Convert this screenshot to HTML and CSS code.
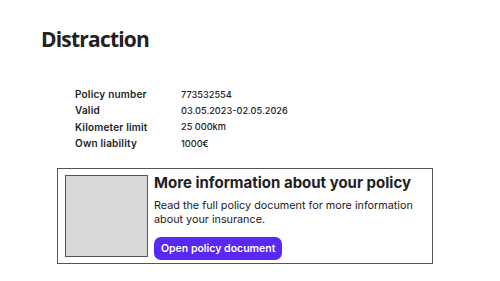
FILE: index.html
```html
<!DOCTYPE html>
<html lang="en">
<head>
  <meta charset="UTF-8">
  <title>Distraction</title>
  <link rel="stylesheet" href="styles.css">
</head>
<body>
  <div class="page">
    <h1>Distraction</h1>

    <dl class="policy">
      <dt>Policy number</dt><dd>773532554</dd>
      <dt>Valid</dt><dd>03.05.2023-02.05.2026</dd>
      <dt>Kilometer limit</dt><dd>25 000km</dd>
      <dt>Own liability</dt><dd>1000€</dd>
    </dl>

    <div class="info-card">
      <div class="thumb"></div>
      <div class="info-body">
        <h2>More information about your policy</h2>
        <p>Read the full policy document for more information about your insurance.</p>
        <a href="#" class="doc-btn">Open policy document</a>
      </div>
    </div>
  </div>
</body>
</html>
```

FILE: styles.css
```css
body {
  margin: 0;
  font-family: Inter, "Noto Sans", sans-serif;
  color: #222;
  background: white;
}
.page {
  padding: 24px 0 0 41px;
}
h1 {
  font-family: "Open Sans", sans-serif;
  font-size: 21px;
  font-weight: 700;
  letter-spacing: -0.8px;
  margin: 0;
  line-height: 30px;
}
.policy {
  display: grid;
  grid-template-columns: 106px auto;
  grid-auto-rows: 16.33px;
  align-items: center;
  margin: 32px 0 0 34px;
}
.policy dt {
  font-size: 10px;
  font-weight: 600;
  letter-spacing: 0.2px;
}
.policy dd {
  margin: 0;
  font-size: 9.2px;
  font-weight: 500;
}
.info-card {
  display: flex;
  gap: 6px;
  width: 360px;
  margin: 17px 0 0 16px;
  padding: 6px 7px 3px;
  border: 1px solid #555;
}
.thumb {
  flex-shrink: 0;
  width: 81px;
  height: 80px;
  background: #d9d9d9;
  border: 1px solid #555;
}
.info-body h2 {
  font-size: 15px;
  font-weight: 700;
  margin: 0 0 8px;
  line-height: 16px;
}
.info-body p {
  font-size: 10.8px;
  margin: 0 0 9.5px;
  line-height: 13.4px;
}
.doc-btn {
  display: inline-block;
  background: #5a28f5;
  color: white;
  text-decoration: none;
  font-size: 10.5px;
  font-weight: 600;
  padding: 4.5px 7px;
  line-height: 14px;
  border-radius: 7px;
}
```
